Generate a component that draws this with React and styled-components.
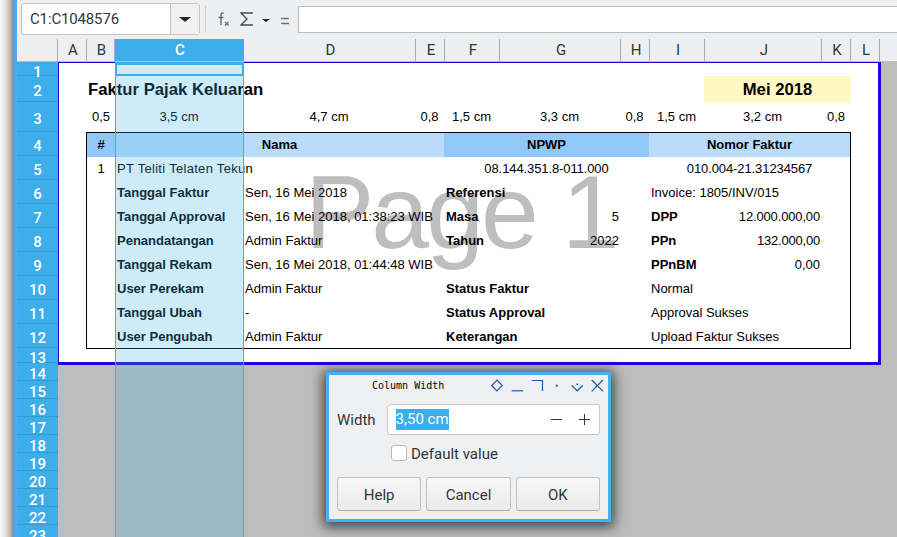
import React from 'react';
import styled, { createGlobalStyle } from 'styled-components';

const GlobalStyle = createGlobalStyle`
  html, body {
    margin: 0;
    padding: 0;
    width: 897px;
    height: 537px;
    overflow: hidden;
    background: #eeeff1;
  }
`;

const uiFont = `Roboto, "Noto Sans", sans-serif`;
const sheetFont = `"Liberation Sans", Arial, sans-serif`;
const accent = '#3daee9';
const pageColumns = '28px 28px 128px 172px 29px 55px 121px 29px 55px 117px 30px 27px';
const tableColumns = '28px 128px 172px 29px 55px 121px 29px 55px 117px 29px';

const Root = styled.div`
  width: 897px;
  height: 537px;
  display: flex;
  overflow: hidden;
  font-family: ${uiFont};
  position: relative;
`;

const WindowShadow = styled.div`
  width: 14px;
  flex: none;
  background: linear-gradient(to right, #fbfbfb 0%, #e6e6e6 35%, #b5b5b5 75%, #808080 100%);
`;

const WindowEdge = styled.div`
  width: 3px;
  flex: none;
  background: #4ea8f7;
`;

const Main = styled.div`
  flex: 1;
  min-width: 0;
  display: flex;
  flex-direction: column;
`;

const Toolbar = styled.div`
  height: 39px;
  flex: none;
  display: flex;
  align-items: flex-start;
  background: #eeeff1;
  padding: 3px 0 0 4px;
  box-sizing: border-box;
`;

const NameBox = styled.div`
  width: 179px;
  height: 32px;
  box-sizing: border-box;
  display: flex;
  background: #fff;
  border: 1px solid #c4c4c4;
  border-radius: 3px;
`;

const NameValue = styled.div`
  flex: 1;
  padding-left: 8px;
  font-size: 15px;
  letter-spacing: -0.15px;
  line-height: 30px;
  color: #31363b;
  border-right: 1px solid #c4c4c4;
`;

const NameArrow = styled.div`
  width: 28px;
  display: flex;
  align-items: center;
  justify-content: center;
  background: #f0f0f1;
`;

const Caret = styled.span`
  display: block;
  width: 0;
  height: 0;
  border-left: ${({ $size }) => $size}px solid transparent;
  border-right: ${({ $size }) => $size}px solid transparent;
  border-top: ${({ $size }) => $size - 1}px solid #232629;
`;

const ToolDivider = styled.div`
  width: 1px;
  height: 26px;
  margin: 3px 0 0 5px;
  background: #c9c9c9;
`;

const ToolIcon = styled.svg`
  display: block;
  flex: none;
  margin: ${({ $margin }) => $margin};
`;

const ToolCaret = styled.div`
  margin: 16px 0 0 8px;
`;

const FormulaInput = styled.div`
  flex: 1;
  height: 27px;
  margin: 3px 0 0 8px;
  box-sizing: border-box;
  background: #fff;
  border: 1px solid #bdbdbd;
  border-right: none;
`;

const ColumnBar = styled.div`
  height: 23px;
  flex: none;
  display: flex;
  background: #eeeff1;
  border-bottom: 1px solid #bdbdbd;
  box-sizing: border-box;
`;

const Corner = styled.div`
  width: 41px;
  flex: none;
  border-right: 1px solid #aaa;
  box-sizing: border-box;
`;

const ColumnHead = styled.div`
  width: ${({ $width }) => $width}px;
  flex: none;
  box-sizing: border-box;
  padding-left: 2px;
  text-align: center;
  font-size: 15px;
  line-height: 22px;
  color: ${({ $active }) => ($active ? '#fff' : '#31363b')};
  font-weight: ${({ $active }) => ($active ? 500 : 400)};
  background: ${({ $active }) => ($active ? accent : 'transparent')};
  border-right: 1px solid ${({ $active }) => ($active ? accent : '#aaa')};
`;

const SheetArea = styled.div`
  flex: 1;
  min-height: 0;
  display: flex;
`;

const RowBar = styled.div`
  width: 41px;
  flex: none;
  background: ${accent};
`;

const RowHead = styled.div`
  height: ${({ $height }) => $height}px;
  box-sizing: border-box;
  border-bottom: 1px solid #339acf;
  text-align: center;
  color: #fff;
  font-size: 15px;
  font-weight: 500;
  line-height: ${({ $height }) => $height + ($height <= 15 ? 6 : 4)}px;
`;

const Canvas = styled.div`
  flex: 1;
  position: relative;
  background: #bdbdbd;
  overflow: hidden;
`;

const Page = styled.div`
  width: 823px;
  height: 303px;
  box-sizing: border-box;
  position: relative;
  background: #fff;
  border-style: solid;
  border-color: #2200dd;
  border-width: 1px 3px 3px 1px;
  font-family: ${sheetFont};
  font-size: 13px;
  color: #000;
`;

const Watermark = styled.div`
  position: absolute;
  left: 246px;
  top: 89px;
  font-size: 104px;
  letter-spacing: -3px;
  line-height: 120px;
  color: #bebebe;
  white-space: nowrap;
`;

const PageRow = styled.div`
  position: relative;
  height: ${({ $height }) => $height}px;
  display: grid;
  grid-template-columns: ${pageColumns};
`;

const Title = styled.div`
  grid-column: 2 / span 8;
  padding-left: 1px;
  font-size: 16.7px;
  font-weight: 700;
  line-height: 27px;
`;

const Period = styled.div`
  grid-column: 10 / span 2;
  background: #fff8c5;
  text-align: center;
  font-size: 16.7px;
  font-weight: 700;
  line-height: 27px;
`;

const SizeCell = styled.div`
  text-align: center;
  line-height: 30px;
  white-space: nowrap;
  &:first-child {
    grid-column-start: 2;
  }
`;

const Table = styled.div`
  position: relative;
  margin-left: 27px;
  width: 765px;
  height: 217px;
  box-sizing: border-box;
  border: 1px solid #000;
  display: grid;
  grid-template-columns: ${tableColumns};
  grid-template-rows: repeat(8, 24px) 23px;
`;

const HeadCell = styled.div`
  grid-column: span ${({ $span }) => $span};
  background: ${({ $strong }) => ($strong ? '#90c9f8' : '#b9dcfa')};
  text-align: center;
  font-weight: 700;
  line-height: 24px;
`;

const Cell = styled.div`
  grid-column: ${({ $start }) => $start} / span ${({ $span = 1 }) => $span};
  padding: 0 ${({ $align }) => ($align === 'right' ? '1px' : '2px')} 0 2px;
  text-align: ${({ $align = 'left' }) => $align};
  font-weight: ${({ $bold }) => ($bold ? 700 : 400)};
  letter-spacing: ${({ $spread = 0 }) => $spread}px;
  line-height: 24px;
  white-space: nowrap;
  min-width: 0;
`;

const ColumnSelection = styled.div`
  position: absolute;
  left: 57px;
  top: 0;
  bottom: 0;
  width: 129px;
  box-sizing: border-box;
  background: rgba(61, 174, 233, 0.25);
  border-left: 1px solid #4ba7df;
  border-right: 1px solid #4ba7df;
`;

const CellCursor = styled.div`
  position: absolute;
  left: -1px;
  right: -1px;
  top: 0;
  height: 14px;
  box-sizing: border-box;
  border-style: solid;
  border-color: ${accent};
  border-width: 3px 2px 2px;
`;

const Dialog = styled.div`
  position: absolute;
  left: 326px;
  top: 372px;
  width: 285px;
  height: 150px;
  box-sizing: border-box;
  border: 3px solid #44b0ef;
  background: #eff0f1;
  box-shadow: 0 2px 12px 3px rgba(0, 0, 0, 0.65);
  display: flex;
  flex-direction: column;
  color: #31363b;
`;

const TitleBar = styled.div`
  height: 20px;
  flex: none;
  display: flex;
  align-items: center;
  padding-left: 43px;
`;

const TitleText = styled.div`
  flex: 1;
  font-family: "DejaVu Sans Mono", monospace;
  font-size: 10px;
  color: #000;
`;

const TitleIcons = styled.svg`
  display: block;
  margin-right: 3px;
`;

const WidthRow = styled.div`
  display: flex;
  align-items: center;
  gap: 11px;
  margin: 9px 8px 0;
`;

const WidthLabel = styled.div`
  font-size: 15px;
`;

const SpinBox = styled.div`
  flex: 1;
  height: 31px;
  box-sizing: border-box;
  display: flex;
  align-items: center;
  padding: 0 8px;
  background: #fff;
  border: 1px solid #c8c8c8;
  border-radius: 3px;
`;

const SelectedText = styled.span`
  background: ${accent};
  color: #fff;
  font-size: 15px;
  line-height: 21px;
  margin-right: auto;
`;

const SpinIcon = styled.svg`
  display: block;
  margin-left: 15px;
`;

const CheckRow = styled.label`
  display: flex;
  align-items: center;
  gap: 4px;
  margin: 10px 0 0 62px;
  font-size: 15px;
  height: 16px;
`;

const CheckBox = styled.span`
  width: 16px;
  height: 16px;
  box-sizing: border-box;
  background: #fff;
  border: 1px solid #b9b9b9;
  border-radius: 3px;
`;

const CheckLabel = styled.span`
  margin-top: 2px;
`;

const ButtonRow = styled.div`
  display: flex;
  gap: 5px;
  margin: 16px 8px 0;
`;

const Button = styled.div`
  flex: 1;
  height: 34px;
  box-sizing: border-box;
  text-align: center;
  font-size: 15px;
  line-height: 34px;
  background: linear-gradient(#f7f7f7, #ebebec);
  border: 1px solid #c2c2c2;
  border-bottom-color: #adadad;
  border-radius: 3px;
`;

const columns = [
  ['A', 29], ['B', 28], ['C', 129, true], ['D', 172], ['E', 29], ['F', 55],
  ['G', 121], ['H', 29], ['I', 55], ['J', 117], ['K', 29], ['L', 29],
];

const rowHeights = [14, 26, 30, 24, 24, 24, 24, 24, 24, 24, 24, 24, 15, 18, 18, 18, 18, 18, 18, 18, 18, 18, 18];

const sizes = ['0,5', '3,5 cm', '4,7 cm', '0,8', '1,5 cm', '3,3 cm', '0,8', '1,5 cm', '3,2 cm', '0,8'];

// start is the table column, B = 1
const tableCells = [
  { start: 1, text: '1', align: 'center' },
  { start: 2, span: 3, text: 'PT Teliti Telaten Tekun', spread: 0.3 },
  { start: 5, span: 3, text: '08.144.351.8-011.000', align: 'center', spread: -0.1 },
  { start: 8, span: 3, text: '010.004-21.31234567', align: 'center', spread: -0.1 },

  { start: 2, text: 'Tanggal Faktur', bold: true },
  { start: 3, span: 2, text: 'Sen, 16 Mei 2018' },
  { start: 5, span: 2, text: 'Referensi', bold: true },
  { start: 8, span: 3, text: 'Invoice: 1805/INV/015' },

  { start: 2, text: 'Tanggal Approval', bold: true },
  { start: 3, span: 2, text: 'Sen, 16 Mei 2018, 01:38:23 WIB' },
  { start: 5, text: 'Masa', bold: true },
  { start: 6, text: '5', align: 'right' },
  { start: 8, text: 'DPP', bold: true },
  { start: 9, text: '12.000.000,00', align: 'right', spread: -0.15 },

  { start: 2, text: 'Penandatangan', bold: true },
  { start: 3, span: 2, text: 'Admin Faktur' },
  { start: 5, text: 'Tahun', bold: true },
  { start: 6, text: '2022', align: 'right' },
  { start: 8, text: 'PPn', bold: true },
  { start: 9, text: '132.000,00', align: 'right', spread: -0.2 },

  { start: 2, text: 'Tanggal Rekam', bold: true },
  { start: 3, span: 2, text: 'Sen, 16 Mei 2018, 01:44:48 WIB' },
  { start: 8, text: 'PPnBM', bold: true },
  { start: 9, text: '0,00', align: 'right' },

  { start: 2, text: 'User Perekam', bold: true },
  { start: 3, span: 2, text: 'Admin Faktur' },
  { start: 5, span: 3, text: 'Status Faktur', bold: true },
  { start: 8, span: 3, text: 'Normal' },

  { start: 2, text: 'Tanggal Ubah', bold: true },
  { start: 3, span: 2, text: '-' },
  { start: 5, span: 3, text: 'Status Approval', bold: true },
  { start: 8, span: 3, text: 'Approval Sukses' },

  { start: 2, text: 'User Pengubah', bold: true },
  { start: 3, span: 2, text: 'Admin Faktur' },
  { start: 5, span: 3, text: 'Keterangan', bold: true },
  { start: 8, span: 3, text: 'Upload Faktur Sukses' },
];

const FxIcon = () => (
  <ToolIcon $margin="7px 0 0 11px" width="13" height="18" viewBox="0 0 13 18" fill="none" stroke="#5f6265" strokeWidth="1.3">
    <path d="M7 3.2C5.5 2.4 4 3 4 5v10" />
    <path d="M1.5 7.5h5" />
    <path d="M8 12l3.5 3.5M11.5 12L8 15.5" strokeWidth="1.1" />
  </ToolIcon>
);

const SigmaIcon = () => (
  <ToolIcon $margin="9px 0 0 10px" width="14" height="14" viewBox="0 0 14 14" fill="none" stroke="#4a4d50" strokeWidth="1.3">
    <path d="M13 1H1l6 6-6 6h12" />
  </ToolIcon>
);

const EqualsIcon = () => (
  <ToolIcon $margin="14px 0 0 10px" width="10" height="8" viewBox="0 0 10 8" fill="none" stroke="#6d7073" strokeWidth="1.6">
    <path d="M1 1.500h8M1 6.500h8" />
  </ToolIcon>
);

const WindowButtons = () => (
  <TitleIcons width="114" height="16" viewBox="0 0 114 16" fill="none" stroke="#1d5cab" strokeWidth="1.2">
    <path d="M6 3.200l5.300 5.300-5.300 5.300-5.300-5.300z" />
    <path d="M20.700 13.800h11.300" />
    <path d="M40.700 3.500h10.800v10.500" />
    <path d="M64.700 7.700h2v2h-2z" fill="#1d5cab" stroke="none" />
    <path d="M80.700 8.500l5.500 5.300 5.500-5.300" />
    <path d="M85.400 6.500h1.600v1.600h-1.600z" fill="#1d5cab" stroke="none" />
    <path d="M100.700 3l11.300 11.300M112 3l-11.300 11.300" />
  </TitleIcons>
);

const App = () => (
  <Root>
    <GlobalStyle />
    <WindowShadow />
    <WindowEdge />
    <Main>
      <Toolbar>
        <NameBox>
          <NameValue>C1:C1048576</NameValue>
          <NameArrow><Caret $size={6} /></NameArrow>
        </NameBox>
        <ToolDivider />
        <FxIcon />
        <SigmaIcon />
        <ToolCaret><Caret $size={4} /></ToolCaret>
        <EqualsIcon />
        <FormulaInput />
      </Toolbar>
      <ColumnBar>
        <Corner />
        {columns.map(([name, width, active]) => (
          <ColumnHead key={name} $width={width} $active={active}>{name}</ColumnHead>
        ))}
      </ColumnBar>
      <SheetArea>
        <RowBar>
          {rowHeights.map((height, index) => (
            <RowHead key={index} $height={height}>{index + 1}</RowHead>
          ))}
        </RowBar>
        <Canvas>
          <Page>
            <Watermark>Page 1</Watermark>
            <PageRow $height={13} />
            <PageRow $height={26}>
              <Title>Faktur Pajak Keluaran</Title>
              <Period>Mei 2018</Period>
            </PageRow>
            <PageRow $height={30}>
              {sizes.map((size, index) => <SizeCell key={index}>{size}</SizeCell>)}
            </PageRow>
            <Table>
              <HeadCell $span={1} $strong>#</HeadCell>
              <HeadCell $span={3}>Nama</HeadCell>
              <HeadCell $span={3} $strong>NPWP</HeadCell>
              <HeadCell $span={3}>Nomor Faktur</HeadCell>
              {tableCells.map((cell, index) => (
                <Cell key={index} $start={cell.start} $span={cell.span} $align={cell.align} $bold={cell.bold} $spread={cell.spread}>
                  {cell.text}
                </Cell>
              ))}
            </Table>
          </Page>
          <ColumnSelection>
            <CellCursor />
          </ColumnSelection>
        </Canvas>
      </SheetArea>
    </Main>
    <Dialog>
      <TitleBar>
        <TitleText>Column Width</TitleText>
        <WindowButtons />
      </TitleBar>
      <WidthRow>
        <WidthLabel>Width</WidthLabel>
        <SpinBox>
          <SelectedText>3,50 cm</SelectedText>
          <SpinIcon width="13" height="13" viewBox="0 0 13 13" fill="none" stroke="#31363b">
            <path d="M1 6.500h11" />
          </SpinIcon>
          <SpinIcon width="13" height="13" viewBox="0 0 13 13" fill="none" stroke="#31363b">
            <path d="M1 6.500h11M6.500 1v11" />
          </SpinIcon>
        </SpinBox>
      </WidthRow>
      <CheckRow>
        <CheckBox />
        <CheckLabel>Default value</CheckLabel>
      </CheckRow>
      <ButtonRow>
        <Button>Help</Button>
        <Button>Cancel</Button>
        <Button>OK</Button>
      </ButtonRow>
    </Dialog>
  </Root>
);

export default App;
